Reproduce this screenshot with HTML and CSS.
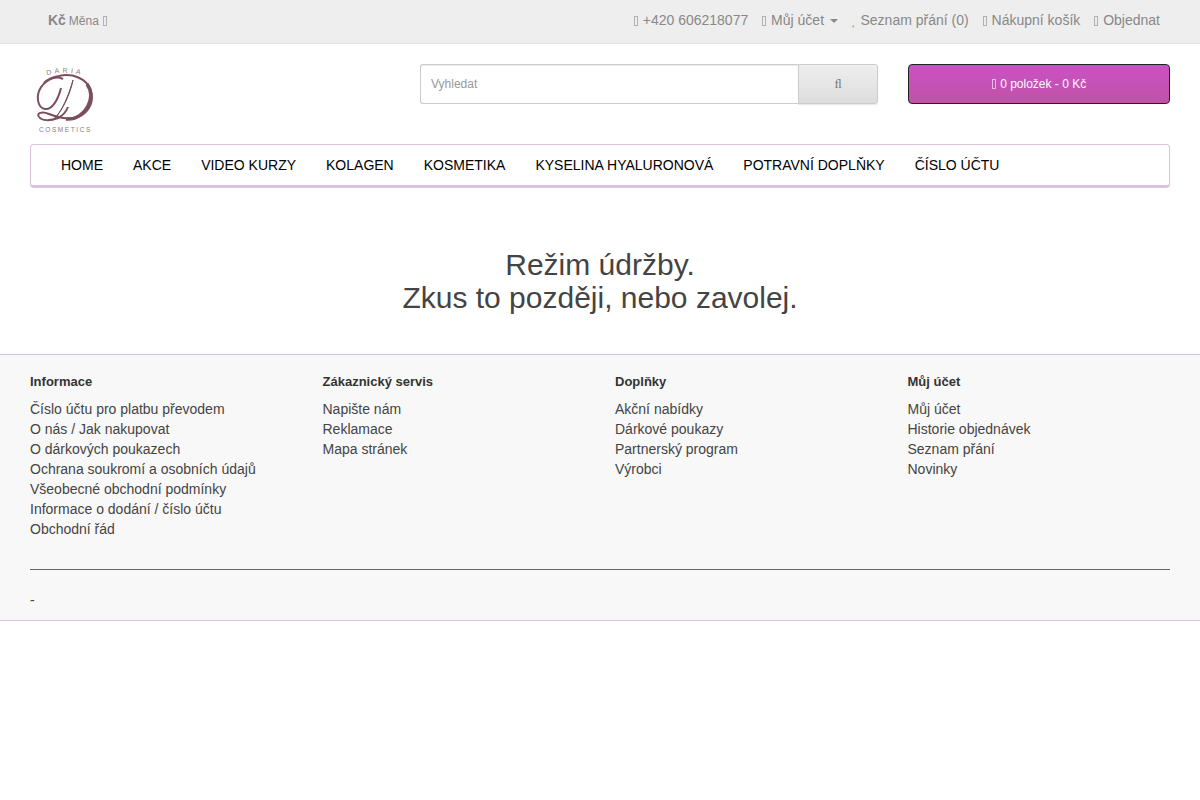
FILE: index.html
```html
<!DOCTYPE html>
<html lang="cs">
<head>
    <meta charset="UTF-8">
    <meta name="viewport" content="width=device-width, initial-scale=1.0">
    <title>Daria Cosmetics</title>
    <link rel="stylesheet" href="styles.css">
</head>
<body>
    <nav class="top">
        <div class="currency">
            <strong>Kč</strong> <span class="currency-label">Měna</span> <i class="box"></i>
        </div>
        <div class="top-links">
            <a href="#"><i class="box"></i> +420 606218077</a>
            <a href="#"><i class="box"></i> Můj účet <span class="caret"></span></a>
            <a href="#"><i class="fa">&#xf004;</i> Seznam přání (0)</a>
            <a href="#"><i class="box"></i> Nákupní košík</a>
            <a href="#"><i class="box"></i> Objednat</a>
        </div>
    </nav>

    <header class="header">
        <a class="logo" href="#">
            <svg width="70" height="70" viewBox="0 0 70 70">
                <path id="logo-arc" class="logo-none" d="M12 14 C22 7 46 7 58 14"/>
                <text class="logo-top"><textPath href="#logo-arc" startOffset="50%" text-anchor="middle">DARIA</textPath></text>
                <path class="logo-stroke" d="M9 53 C6 49 12 47 19 50 C26 53 40 57 50 52 C60 47 64 36 61 27 C57 14 42 9 29 12 C22 13 17 16 14 19"/>
                <path class="logo-heavy" d="M36 55 C46 56 54 50 58 42 C62 34 62 27 57 20"/>
                <path class="logo-stroke" d="M33 15 C25 11 14 16 9 27 C6 36 9 44 15 45 C22 46 28 36 31 24"/>
                <path class="logo-stroke" d="M9 53 C12 57 20 57 28 54 C32 52 36 48 38 43"/>
                <path class="logo-thick" d="M43 16 C41 27 34 45 24 55 C32 48 39 30 43 16Z"/>
                <text class="logo-bottom" x="35.5" y="68" text-anchor="middle">COSMETICS</text>
            </svg>
        </a>
        <div class="search">
            <input class="search-input" type="text" placeholder="Vyhledat">
            <button class="search-button"><span class="search-icon">&#xfb02;</span></button>
        </div>
        <button class="cart"><i class="box"></i> 0 položek - 0 Kč</button>
    </header>

    <div class="menu">
        <a href="#">HOME</a>
        <a href="#">AKCE</a>
        <a href="#">VIDEO KURZY</a>
        <a href="#">KOLAGEN</a>
        <a href="#">KOSMETIKA</a>
        <a href="#">KYSELINA HYALURONOVÁ</a>
        <a href="#">POTRAVNÍ DOPLŇKY</a>
        <a href="#">ČÍSLO ÚČTU</a>
    </div>

    <h1 class="maintenance">Režim údržby.<br>Zkus to později, nebo zavolej.</h1>

    <footer class="footer">
        <div class="footer-cols">
            <div>
                <h5>Informace</h5>
                <ul>
                    <li><a href="#">Číslo účtu pro platbu převodem</a></li>
                    <li><a href="#">O nás / Jak nakupovat</a></li>
                    <li><a href="#">O dárkových poukazech</a></li>
                    <li><a href="#">Ochrana soukromí a osobních údajů</a></li>
                    <li><a href="#">Všeobecné obchodní podmínky</a></li>
                    <li><a href="#">Informace o dodání / číslo účtu</a></li>
                    <li><a href="#">Obchodní řád</a></li>
                </ul>
            </div>
            <div>
                <h5>Zákaznický servis</h5>
                <ul>
                    <li><a href="#">Napište nám</a></li>
                    <li><a href="#">Reklamace</a></li>
                    <li><a href="#">Mapa stránek</a></li>
                </ul>
            </div>
            <div>
                <h5>Doplňky</h5>
                <ul>
                    <li><a href="#">Akční nabídky</a></li>
                    <li><a href="#">Dárkové poukazy</a></li>
                    <li><a href="#">Partnerský program</a></li>
                    <li><a href="#">Výrobci</a></li>
                </ul>
            </div>
            <div>
                <h5>Můj účet</h5>
                <ul>
                    <li><a href="#">Můj účet</a></li>
                    <li><a href="#">Historie objednávek</a></li>
                    <li><a href="#">Seznam přání</a></li>
                    <li><a href="#">Novinky</a></li>
                </ul>
            </div>
        </div>
        <hr class="footer-line">
        <p class="footer-note">-</p>
    </footer>
</body>
</html>
```

FILE: styles.css
```css
body {
    font-family: "Liberation Sans", Arial, sans-serif;
    font-size: 14px;
    line-height: 20px;
    color: #444;
    margin: 0;
    background-color: #fff;
}
a {
    color: inherit;
    text-decoration: none;
}
.fa {
    font-family: "Liberation Serif", serif;
    font-style: normal;
}
/* missing icon-font glyph */
.box {
    display: inline-block;
    box-sizing: border-box;
    width: 4px;
    height: 10px;
    margin-right: 1px;
    vertical-align: -1px;
    border: 1px solid currentColor;
    opacity: 0.6;
}

/* top bar */
.top {
    display: flex;
    justify-content: space-between;
    align-items: center;
    box-sizing: border-box;
    height: 44px;
    padding: 0 40px 2px 48px;
    background-color: #eee;
    border-bottom: 1px solid #e2e2e2;
    color: #888;
}
.currency strong {
    margin-right: -1px;
}
.currency-label {
    font-size: 12px;
}
.top-links {
    display: flex;
    gap: 14px;
}
.caret {
    display: inline-block;
    margin-left: 2px;
    vertical-align: middle;
    border-top: 4px solid #888;
    border-left: 4px solid transparent;
    border-right: 4px solid transparent;
}

/* logo, search, cart */
.header {
    display: flex;
    align-items: flex-start;
    padding: 20px 30px 10px;
    height: 70px;
}
.logo {
    width: 390px;
    height: 70px;
}
.logo-none {
    fill: none;
}
.logo-top, .logo-bottom {
    font-family: "Liberation Sans", Arial, sans-serif;
    font-size: 7px;
    letter-spacing: 3px;
    fill: #8a7a80;
}
.logo-bottom {
    font-size: 6.5px;
    letter-spacing: 1.6px;
}
.logo-stroke {
    fill: none;
    stroke: #7b4f60;
    stroke-width: 2;
}
.logo-heavy {
    fill: none;
    stroke: #7b4f60;
    stroke-width: 3.5;
}
.logo-thick {
    fill: #7b4f60;
    stroke: #7b4f60;
    stroke-width: 1;
}
.search {
    display: flex;
    width: 458px;
    height: 40px;
}
.search-input {
    flex: 1;
    box-sizing: border-box;
    padding: 0 10px;
    font-family: inherit;
    font-size: 12px;
    border: 1px solid #ccc;
    border-right: 0;
    border-radius: 3px 0 0 3px;
    box-shadow: inset 0 1px 1px rgba(0,0,0,0.075);
}
.search-input::placeholder {
    color: #999;
}
.search-button {
    width: 80px;
    padding: 0;
    color: #777;
    font-size: 13px;
    background: linear-gradient(to bottom, #eee, #ddd);
    border: 1px solid #ccc;
    border-radius: 0 3px 3px 0;
    box-shadow: 0 1px 1px rgba(0,0,0,0.1);
}
.search-icon {
    font-family: "Liberation Serif", serif;
}
.cart {
    width: 262px;
    height: 40px;
    margin-left: 30px;
    color: #fff;
    font-family: inherit;
    font-size: 12px;
    background: linear-gradient(to bottom, #c952c5, #c052a6);
    border: 1px solid #222;
    border-radius: 4px;
}

/* menu */
.menu {
    display: flex;
    height: 40px;
    margin: 0 30px;
    padding: 0 15px;
    border: 1px solid #dcc3dc;
    border-bottom-width: 3px;
    border-radius: 4px;
}
.menu a {
    padding: 0 15px;
    line-height: 40px;
    color: #000;
}

/* maintenance message */
.maintenance {
    margin: 60px 0 40px;
    font-size: 30px;
    font-weight: 400;
    line-height: 33px;
    text-align: center;
}

/* footer */
.footer {
    height: 265px;
    padding: 0 30px;
    background-color: #f8f8f8;
    border-top: 1px solid #dcc3dc;
    border-bottom: 1px solid #dcc3dc;
}
.footer-cols {
    display: grid;
    grid-template-columns: repeat(3, 292.5px) 1fr;
    height: 194px;
    padding-top: 20px;
}
.footer h5 {
    margin: 0 0 10px;
    font-size: 13px;
    line-height: 14px;
    color: #333;
}
.footer ul {
    margin: 0;
    padding: 0;
    list-style: none;
}
.footer-line {
    margin: 0;
    border: 0;
    border-top: 1px solid #666;
}
.footer-note {
    margin: 20px 0 0;
}
```
